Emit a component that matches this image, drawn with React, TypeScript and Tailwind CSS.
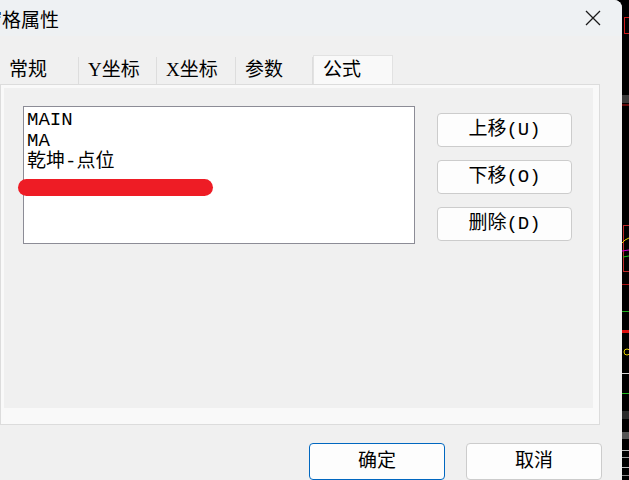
import React from 'react';

const cjk = { fontFamily: '"Liberation Serif", "Noto Sans CJK SC", serif' };
const mono = { fontFamily: '"Liberation Mono", "Noto Sans CJK SC", monospace' };

const tabs = [
  { label: '常规', w: 'w-[79px]' },
  { label: 'Y坐标', w: 'w-[78px]' },
  { label: 'X坐标', w: 'w-[79px]' },
  { label: '参数', w: 'w-[77px]' },
];

const items = ['MAIN', 'MA', '乾坤-点位'];
const sideButtons = ['上移(U)', '下移(O)', '删除(D)'];

// bit of the chart window peeking out on the right
const ChartStrip: React.FC = () => (
  <svg width="7" height="480" viewBox="0 0 7 480" className="shrink-0 bg-black">
    <rect x="2.5" y="17.5" width="6" height="16" fill="none" stroke="#d01c1c" />
    <rect x="0" y="95" width="7" height="8" fill="#3a3a3a" />
    <line x1="0" y1="105" x2="7" y2="105" stroke="#c81414" />
    <rect x="1.5" y="225.5" width="6" height="46" fill="none" stroke="#c02a2a" />
    <polyline points="0,243 3,240 7,238" fill="none" stroke="#e6d200" />
    <line x1="0" y1="251" x2="7" y2="250" stroke="#d000d0" />
    <line x1="1" y1="257" x2="7" y2="256" stroke="#18c018" />
    <line x1="0" y1="284.5" x2="7" y2="284.5" stroke="#b01010" />
    <line x1="0" y1="311.5" x2="7" y2="311.5" stroke="#20b020" />
    <rect x="0" y="330" width="7" height="3" fill="#e01010" />
    <circle cx="5" cy="352" r="3" fill="none" stroke="#e6d200" />
    <line x1="0" y1="373.5" x2="7" y2="373.5" stroke="#d8d8d8" />
    <line x1="0" y1="393.5" x2="7" y2="393.5" stroke="#20c020" />
    <rect x="0" y="411" width="7" height="8" fill="#2a2a2a" />
    <rect x="0" y="432" width="7" height="7" fill="#555" />
    <line x1="0" y1="450.5" x2="7" y2="450.5" stroke="#bbb" />
    <line x1="0" y1="457.5" x2="7" y2="457.5" stroke="#999" />
    <line x1="0" y1="467.5" x2="7" y2="467.5" stroke="#bbb" />
    <line x1="0" y1="475.5" x2="7" y2="475.5" stroke="#888" />
  </svg>
);

const App: React.FC = () => {
  return (
    <div className="w-[629px] h-[480px] flex overflow-hidden bg-black">
      <div className="w-[622px] h-full flex flex-col bg-[#f0f0f0] rounded-tr-[8px] overflow-hidden">
        {/* Title bar */}
        <div className="h-[36px] shrink-0 flex items-center justify-between bg-[#eef1f3]">
          <span
            className="ml-[-17px] text-[19px] text-black leading-none"
            style={{ fontFamily: '"Noto Sans CJK SC", sans-serif' }}
          >
            窗格属性
          </span>
          <svg width="16" height="16" viewBox="0 0 16 16" className="mr-[21px]">
            <path d="M1 1 L15 15 M15 1 L1 15" stroke="#1a1a1a" strokeWidth="1.3" />
          </svg>
        </div>

        {/* Tabs */}
        <div className="mt-[19px] h-[29px] flex items-end" style={cjk}>
          {tabs.map((t) => (
            <div
              key={t.label}
              className={`${t.w} h-[27px] flex items-center pl-[9px] text-[19px] text-black border-r border-[#dddddd] bg-[#f0f0f0]`}
            >
              {t.label}
            </div>
          ))}
          <div className="w-[80px] h-[29px] flex items-center pl-[9px] text-[19px] text-black bg-[#f9f9f9] border border-b-0 border-[#e2e2e2]">
            公式
          </div>
        </div>

        {/* Tab panel */}
        <div className="w-[600px] h-[343px] border border-[#dcdcdc] bg-[#f9f9f9] pl-[3px] pt-[3px]">
          <div className="w-[589px] h-[320px] bg-[#f0f0f0] flex pl-[19px] pt-[18px]">
            <div className="relative w-[392px] h-[138px] bg-white border border-[#8c8c96] pl-[3px] pt-[3px]">
              {items.map((it) => (
                <div key={it} className="text-[19px] leading-[21px] text-black" style={mono}>
                  {it}
                </div>
              ))}
              <div className="absolute left-[-6px] top-[72px] w-[195px] h-[17px] rounded-full bg-[#ee1c25]" />
            </div>
            <div className="ml-[22px] mt-[7px] flex flex-col gap-[13px]">
              {sideButtons.map((b) => (
                <div
                  key={b}
                  className="w-[135px] h-[34px] flex items-center justify-center rounded-[4px] border border-[#cccccc] bg-[#fdfdfd] text-[19px] text-black"
                  style={mono}
                >
                  {b}
                </div>
              ))}
            </div>
          </div>
        </div>

        {/* Footer buttons */}
        <div className="mt-[18px] flex gap-[21px] pl-[309px]" style={cjk}>
          <div className="w-[136px] h-[37px] flex items-center justify-center rounded-[4px] border border-[#0067c0] bg-[#fdfdfd] text-[19px] text-black">
            确定
          </div>
          <div className="w-[136px] h-[37px] flex items-center justify-center rounded-[4px] border border-[#cccccc] bg-[#fdfdfd] text-[19px] text-black">
            取消
          </div>
        </div>
      </div>
      <ChartStrip />
    </div>
  );
};

export default App;
